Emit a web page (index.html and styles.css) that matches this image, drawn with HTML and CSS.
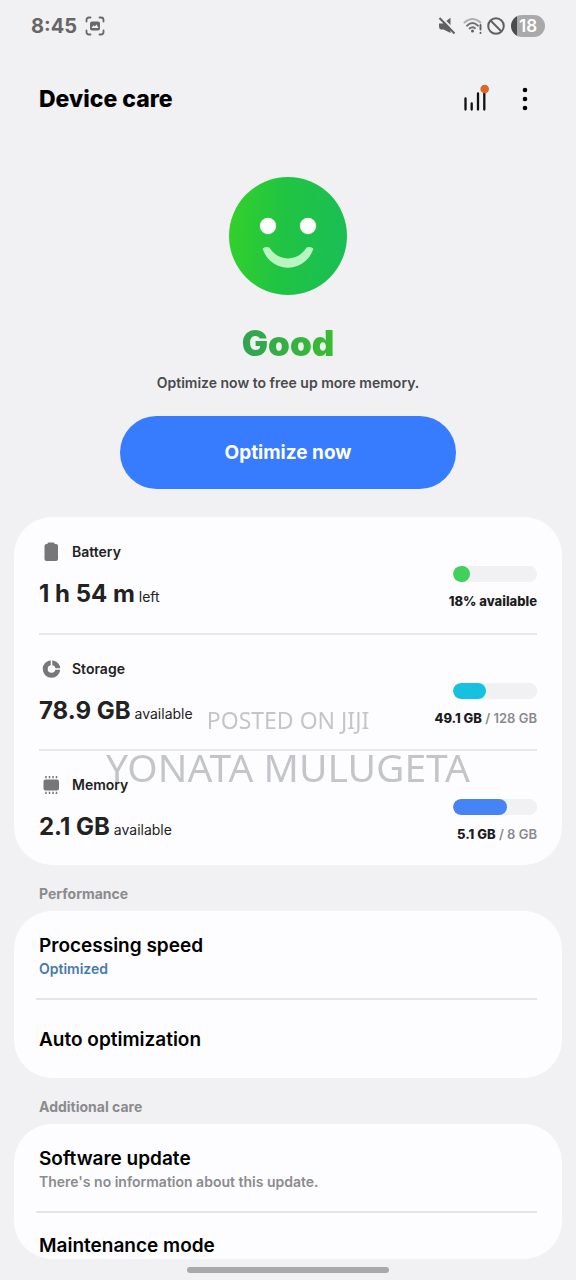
FILE: index.html
```html
<!DOCTYPE html>
<html lang="en">
<head>
<meta charset="utf-8">
<meta name="viewport" content="width=device-width, initial-scale=1">
<title>Device care</title>
<link rel="stylesheet" href="styles.css">
</head>
<body>
<div class="screen">
  <div class="status">
    <div class="status-side">
      <span class="clock">8:45</span>
      <svg width="20" height="20" viewBox="0 0 20 20" fill="none" stroke="#686868" stroke-width="1.8" stroke-linecap="round" aria-hidden="true">
        <path d="M1.5 5.5V4Q1.5 1.5 4 1.5H5.5M14.500 1.500H16Q18.500 1.500 18.500 4V5.500M18.500 14.500V16Q18.500 18.500 16 18.500H14.500M5.500 18.500H4Q1.500 18.500 1.500 16V14.500"/>
        <path fill="#686868" stroke="none" fill-rule="evenodd" d="M7 5.500H13Q15 5.500 15 7.500V12.500Q15 14.500 13 14.500H7Q5 14.500 5 12.500V7.500Q5 5.500 7 5.500ZM6.500 12H13.500L11.500 8.500L9.800 10.500L8.500 9.300Z"/>
      </svg>
    </div>
    <div class="status-icons">
      <svg width="18" height="18" viewBox="0 0 18 18" aria-hidden="true">
        <path fill="#606060" d="M1 6.500H5L12.500 .8V16L5.500 12.500H3.200Q1 12 1 9.500Z"/>
        <path stroke="#f1f1f3" stroke-width="2" d="M3 0L18 15"/>
        <path stroke="#606060" stroke-width="2" d="M1.500 1L16.500 16.500"/>
      </svg>
      <svg width="20" height="18" viewBox="0 0 20 18" fill="none" stroke-linecap="round" stroke-width="1.9" aria-hidden="true">
        <path stroke="#b0b0b2" d="M1.500 5.500Q9.500-1.500 17.500 5.500"/>
        <path stroke="#707070" d="M4 8.700Q9.500 3.500 15 8.700M6.500 11.500Q9.500 9 12 11.200"/>
        <circle cx="9.500" cy="14" r="1.500" fill="#606060"/>
        <path stroke="#606060" d="M17.500 8V12.500M17.500 15.800V16"/>
      </svg>
      <svg width="18" height="18" viewBox="0 0 18 18" fill="none" stroke="#606060" stroke-width="2" aria-hidden="true">
        <circle cx="9" cy="9" r="7.800"/><path d="M3.500 3.500L14.500 14.500"/>
      </svg>
      <span class="charge">18</span>
    </div>
  </div>

  <header class="topbar">
    <h1>Device care</h1>
    <div class="actions">
      <button class="icon-button" aria-label="Usage history">
        <svg width="28" height="30" viewBox="0 0 28 30" aria-hidden="true">
          <path stroke="#111" stroke-width="2.300" stroke-linecap="round" d="M3.500 14.500V25.500M9.700 19.500V25.500M16 9.500V25.500M22.300 7V25.500"/>
          <circle cx="22.700" cy="5" r="4.300" fill="#d9672b"/>
        </svg>
      </button>
      <button class="icon-button" aria-label="More options">
        <svg width="6" height="24" viewBox="0 0 6 24" aria-hidden="true">
          <circle cx="3" cy="3" r="2.300"/><circle cx="3" cy="12" r="2.300"/><circle cx="3" cy="21" r="2.300"/>
        </svg>
      </button>
    </div>
  </header>

  <main>
    <section class="summary">
      <svg class="face" width="118" height="118" viewBox="0 0 118 118" role="img" aria-label="Smiling face">
        <defs><linearGradient id="face" x1="0" y1=".45" x2="1" y2=".55">
          <stop offset="0" stop-color="#33d02b"/><stop offset=".45" stop-color="#20c443"/><stop offset="1" stop-color="#1abe54"/>
        </linearGradient></defs>
        <circle cx="59" cy="59" r="59" fill="url(#face)"/>
        <circle cx="39" cy="49" r="8.200" fill="#fafffa"/><circle cx="79" cy="49" r="8.200" fill="#fafffa"/>
        <path d="M33.500 71.500Q36 69 40.500 70.500C49 85 69 85 77.500 70.500Q82 69 84.500 71.500C76 97 42 97 33.500 71.500Z" fill="#b8f5c0"/>
      </svg>
      <h2 class="grade">Good</h2>
      <p class="advice">Optimize now to free up more memory.</p>
      <button class="optimize">Optimize now</button>
    </section>

    <section class="card">
      <div class="resource">
        <div class="resource-text">
          <div class="resource-name">
            <svg width="24" height="20" viewBox="0 0 24 20" fill="#777779" aria-hidden="true"><path d="M8.500 2V1.500Q8.500 .5 9.500 .5H14.500Q15.500 .5 15.500 1.500V2H17Q19 2 19 4V17Q19 19 17 19H7.500Q5.500 19 5.500 17V4Q5.500 2 7.500 2Z"/></svg>
            <span>Battery</span>
          </div>
          <div class="amount"><strong>1 h 54 m</strong> left</div>
        </div>
        <div class="usage">
          <progress class="green" max="84" value="17" aria-label="Battery"></progress>
          <div class="caption"><b>18% available</b></div>
        </div>
      </div>
      <div class="resource">
        <div class="resource-text">
          <div class="resource-name">
            <svg width="24" height="20" viewBox="0 0 24 20" fill="none" aria-hidden="true"><circle cx="12.500" cy="10" r="6.300" stroke="#777779" stroke-width="5"/><path d="M12.500 10V0M12.500 10H22" stroke="#fdfdff" stroke-width="1.500"/><path d="M13.300 6.500Q16 7 16.500 9.300H13.300Z" fill="#fdfdff"/></svg>
            <span>Storage</span>
          </div>
          <div class="amount"><strong>78.9 GB</strong> available</div>
        </div>
        <div class="usage">
          <progress class="cyan" max="84" value="33" aria-label="Storage"></progress>
          <div class="caption"><b>49.1 GB</b> / 128 GB</div>
        </div>
      </div>
      <div class="resource">
        <div class="resource-text">
          <div class="resource-name">
            <svg width="24" height="20" viewBox="0 0 24 20" aria-hidden="true"><rect x="4.500" y="4.500" width="15.500" height="11" rx="2" fill="#777779"/><path d="M7 1V3.200M10.500 1V3.200M14 1V3.200M17.500 1V3.200M7 16.800V19M10.500 16.800V19M14 16.800V19M17.500 16.800V19" stroke="#777779" stroke-width="1.500"/></svg>
            <span>Memory</span>
          </div>
          <div class="amount"><strong>2.1 GB</strong> available</div>
        </div>
        <div class="usage">
          <progress class="blue" max="84" value="54" aria-label="Memory"></progress>
          <div class="caption"><b>5.1 GB</b> / 8 GB</div>
        </div>
      </div>
      <div class="watermark"><span class="posted">POSTED ON JIJI</span><span class="owner">YONATA MULUGETA</span></div>
    </section>

    <h3 class="group-title">Performance</h3>
    <section class="card">
      <a class="item" href="#speed"><span class="item-title">Processing speed</span><span class="item-note state">Optimized</span></a>
      <a class="item single" href="#auto"><span class="item-title">Auto optimization</span></a>
    </section>

    <h3 class="group-title">Additional care</h3>
    <section class="card last">
      <a class="item" href="#update"><span class="item-title">Software update</span><span class="item-note">There's no information about this update.</span></a>
      <a class="item cut" href="#maintenance"><span class="item-title">Maintenance mode</span></a>
    </section>
  </main>
  <div class="home-bar"></div>
</div>
</body>
</html>
```
FILE: styles.css
```css
* { box-sizing: border-box; }
body { margin: 0; background: #f1f1f3; color: #000; font-family: Inter, Roboto, sans-serif; }
h1, h2, h3, p { margin: 0; }
button { border: 0; padding: 0; background: none; font-family: inherit; cursor: pointer; }
a { color: inherit; text-decoration: none; }
svg { display: block; }

.screen { padding: 0 14px; }

.status { display: flex; justify-content: space-between; align-items: center; height: 52px; padding: 0 17px; }
.status-side { display: flex; align-items: center; gap: 8px; }
.clock { font-size: 20px; line-height: 24px; font-weight: 700; color: #666; }
.status-icons { display: flex; align-items: center; gap: 4px; }
.status-icons svg:first-child { margin-right: 3px; }
.charge { width: 34px; margin-left: 2px; border-radius: 11px; background: linear-gradient(to right, #4c4c4c 6px, #a9a9ab 6px); color: #fff; font-size: 17px; line-height: 22px; font-weight: 600; text-align: center; }

.topbar { display: flex; justify-content: space-between; align-items: center; height: 94px; padding: 0 25px; }
h1 { font-size: 23px; line-height: 28px; font-weight: 800; }
.actions { display: flex; align-items: center; gap: 29px; }
.icon-button { padding: 0 3px; }
.icon-button + .icon-button { padding: 0 9px 0 0; }

.summary { display: flex; flex-direction: column; align-items: center; padding: 31px 0 28px; }
.grade { margin-top: 26px; font-size: 35px; line-height: 44px; font-weight: 900; color: transparent; background: linear-gradient(to right, #32a352, #38bd31); background-clip: text; -webkit-background-clip: text; }
.advice { margin-top: 8px; font-size: 14px; line-height: 20px; font-weight: 600; color: #4a4a4c; }
.optimize { width: 62%; max-width: 336px; min-width: 200px; height: 73px; margin-top: 23px; border-radius: 37px; background: #377bff; color: #fff; font-size: 19px; font-weight: 700; }

.card { position: relative; padding: 0 25px; border-radius: 38px; background: #fdfdff; }
.resource { display: flex; justify-content: space-between; align-items: center; height: 116px; }
.resource + .resource { border-top: 2px solid #e8e8ea; }
.resource-text { padding-top: 4px; }
.resource-name { display: flex; align-items: center; gap: 9px; font-size: 14px; line-height: 20px; font-weight: 600; color: #222; }
.amount { margin-top: 16px; font-size: 14px; line-height: 32px; color: #222; }
.amount strong { font-size: 24px; font-weight: 700; }
.usage { display: flex; flex-direction: column; align-items: flex-end; gap: 9px; padding-top: 26px; }
.caption { font-size: 13px; line-height: 20px; font-weight: 600; color: #8a8a8c; }
.caption b { color: #1c1c1e; font-weight: 800; }
progress { appearance: none; -webkit-appearance: none; display: block; width: 84px; height: 16px; border: 0; border-radius: 8px; overflow: hidden; background: #f1f1f3; }
progress::-webkit-progress-bar { background: #f1f1f3; border-radius: 8px; }
progress::-webkit-progress-value { border-radius: 8px; background: var(--fill); }
.green { --fill: #40d05c; }
.cyan { --fill: #15c1df; }
.blue { --fill: #4683f4; }

.watermark { position: absolute; left: 0; right: 0; top: 189px; display: flex; flex-direction: column; align-items: center; font-family: "Noto Sans", sans-serif; color: #6d737a; opacity: .4; pointer-events: none; }
.posted { font-size: 23px; line-height: 28px; }
.owner { font-size: 39px; line-height: 54px; margin-top: 6px; }

.group-title { padding: 18px 25px 6px; font-size: 14px; line-height: 22px; font-weight: 700; color: #8b8b8d; }
.item { display: flex; flex-direction: column; justify-content: center; min-height: 87px; padding-top: 2px; }
.item + .item { position: relative; border-top: 2px solid #e5e5e7; margin-left: -3px; padding-left: 3px; }
.item-title { font-size: 19px; line-height: 26px; font-weight: 600; }
.item-note { font-size: 14px; line-height: 20px; font-weight: 600; color: #8b8b8d; }
.state { color: #487aa8; }
.single { min-height: 80px; }
.cut { min-height: 48px; padding-top: 20px; justify-content: flex-start; }
.last { overflow: hidden; }
.home-bar { width: 37%; height: 6px; margin: 8px auto 6px; border-radius: 3px; background: #a9a9ab; }
```
